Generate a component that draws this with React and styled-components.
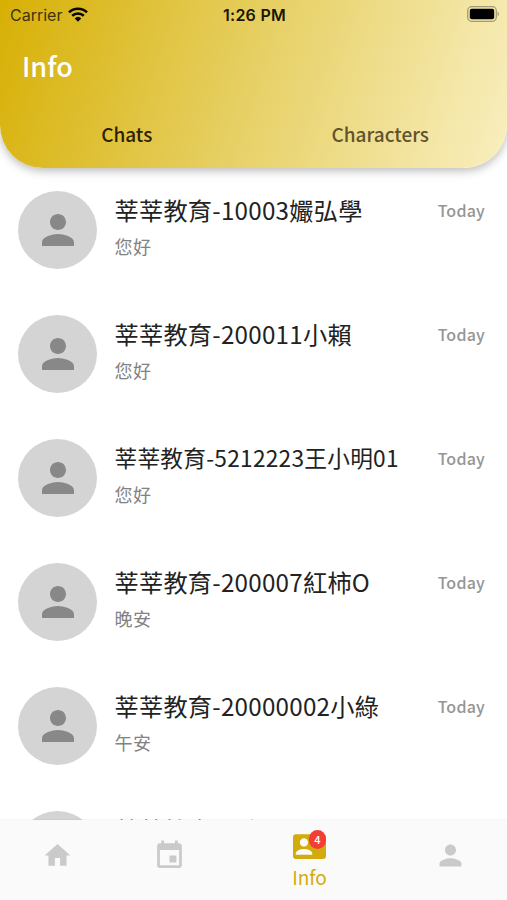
import React from "react";
import styled, { createGlobalStyle } from "styled-components";
import {
  MdPerson,
  MdHome,
  MdInsertInvitation,
  MdContactMail,
} from "react-icons/md";

const GlobalStyle = createGlobalStyle`
  * {
    box-sizing: border-box;
  }
  body {
    margin: 0;
    background: #fff;
    font-family: "Noto Sans CJK TC", "Noto Sans", sans-serif;
  }
`;

const Screen = styled.div`
  width: 507px;
  height: 900px;
  display: flex;
  flex-direction: column;
  overflow: hidden;
  background: #fff;
`;

const Header = styled.header`
  flex: none;
  position: relative;
  z-index: 1;
  height: 168px;
  display: flex;
  flex-direction: column;
  border-radius: 0 0 43px 43px;
  background: linear-gradient(
    108deg,
    #d7b005 0%,
    #e6cf62 48%,
    #f9efc0 100%
  );
  box-shadow: 0 3px 10px rgba(0, 0, 0, 0.27);
`;

const StatusBar = styled.div`
  height: 29px;
  padding: 0 8px 0 10px;
  display: grid;
  grid-template-columns: 1fr auto 1fr;
  align-items: center;
  font-family: Inter, sans-serif;
  font-size: 16px;
`;

const Carrier = styled.div`
  display: flex;
  align-items: center;
  gap: 6px;
  color: #3d3410;
`;

const Clock = styled.div`
  font-weight: 600;
  letter-spacing: 0.25px;
  color: #1a1503;
`;

const Battery = styled.svg`
  justify-self: end;
  margin-bottom: 1px;
`;

const Title = styled.h1`
  margin: 15px 0 0 22px;
  font-size: 27px;
  line-height: 44px;
  font-weight: 500;
  color: #fff;
`;

const Tabs = styled.div`
  margin-top: 26px;
  display: flex;
`;

const Tab = styled.div`
  flex: 1;
  text-align: center;
  font-size: 19px;
  line-height: 40px;
  font-weight: 500;
  color: ${(props) => (props.$active ? "#2b2305" : "#61532b")};
`;

const List = styled.main`
  flex: 1;
  min-height: 0;
  overflow: hidden;
`;

const Row = styled.div`
  height: 124px;
  padding: 23px 22px 0 18px;
  display: flex;
  align-items: flex-start;
`;

const Avatar = styled.div`
  flex: none;
  width: 79px;
  height: 78px;
  border-radius: 50%;
  display: flex;
  align-items: center;
  justify-content: center;
  background: #d4d4d4;
  color: #888;
`;

const Texts = styled.div`
  flex: 1;
  min-width: 0;
  margin-left: 17.5px;
`;

const Name = styled.div`
  font-size: ${(props) => props.$size || 24.2}px;
  line-height: 37px;
  letter-spacing: 0.25px;
  white-space: nowrap;
  color: #222;
`;

const Message = styled.div`
  font-size: 18px;
  line-height: 37px;
  letter-spacing: 0.5px;
  color: #828282;
`;

const Time = styled.div`
  font-size: 16px;
  line-height: 39px;
  font-weight: 500;
  letter-spacing: 0.2px;
  color: #959595;
`;

const NavBar = styled.nav`
  flex: none;
  height: 80px;
  padding-bottom: 6px;
  display: flex;
  background: #fafafa;
  box-shadow: 0 -1px 1px rgba(0, 0, 0, 0.03);
`;

const NavItem = styled.div`
  width: ${(props) => props.$width}px;
  display: flex;
  flex-direction: column;
  align-items: center;
  justify-content: center;
  padding-top: ${(props) => (props.$active ? "6px" : "0")};
  padding-bottom: ${(props) => (props.$active ? "0" : "4px")};
  color: ${(props) => (props.$active ? "#d4ab0c" : "#cacaca")};
`;

const IconWrap = styled.div`
  position: relative;
  height: 33px;
`;

const Badge = styled.span`
  position: absolute;
  top: 0;
  right: 0;
  width: 17px;
  height: 19px;
  border-radius: 9px;
  background: #f23f34;
  color: #fff;
  font-size: 11px;
  line-height: 19px;
  font-weight: 500;
  text-align: center;
`;

const NavLabel = styled.div`
  font-size: 19px;
  line-height: 27px;
`;

const chats = [
  { name: "莘莘教育-10003孍弘學", message: "您好" },
  { name: "莘莘教育-200011小賴", message: "您好" },
  { name: "莘莘教育-5212223王小明01", message: "您好", size: 22.7 },
  { name: "莘莘教育-200007紅柿O", message: "晚安" },
  { name: "莘莘教育-20000002小綠", message: "午安" },
  { name: "莘莘教育-小紅", message: "" },
];

const App = () => {
  return (
    <Screen>
      <GlobalStyle />
      <Header>
        <StatusBar>
          <Carrier>
            Carrier
            <svg width="20" height="15" viewBox="0 0 20 15" fill="none">
              <g stroke="#080600" strokeWidth="2.6">
                <path d="M1 5.4a12.8 12.8 0 0 1 18 0" />
                <path d="M4.2 8.8a8.3 8.3 0 0 1 11.6 0" />
              </g>
              <path d="M6.7 11.4a4.8 4.8 0 0 1 6.6 0L10 14.8z" fill="#080600" />
            </svg>
          </Carrier>
          <Clock>1:26 PM</Clock>
          <Battery width="33" height="16" viewBox="0 0 33 16">
            <rect
              x="1.7"
              y="0.7"
              width="28.6"
              height="14.6"
              rx="4"
              fill="none"
              stroke="#a39b73"
              strokeWidth="1.3"
            />
            <rect x="3.8" y="2.8" width="24.4" height="10.4" rx="2" />
            <path d="M31.6 5.6c1.8.8 1.8 4 0 4.8z" fill="#a39b73" />
          </Battery>
        </StatusBar>
        <Title>Info</Title>
        <Tabs>
          <Tab $active>Chats</Tab>
          <Tab>Characters</Tab>
        </Tabs>
      </Header>

      <List>
        {chats.map((chat) => (
          <Row key={chat.name}>
            <Avatar>
              <MdPerson size={48} />
            </Avatar>
            <Texts>
              <Name $size={chat.size}>{chat.name}</Name>
              <Message>{chat.message}</Message>
            </Texts>
            <Time>Today</Time>
          </Row>
        ))}
      </List>

      <NavBar>
        <NavItem $width={114}>
          <MdHome size={31} />
        </NavItem>
        <NavItem $width={111}>
          <MdInsertInvitation size={33} />
        </NavItem>
        <NavItem $width={169} $active>
          <IconWrap>
            <MdContactMail size={33} />
            <Badge>4</Badge>
          </IconWrap>
          <NavLabel>Info</NavLabel>
        </NavItem>
        <NavItem $width={113}>
          <MdPerson size={33} />
        </NavItem>
      </NavBar>
    </Screen>
  );
};

export default App;
